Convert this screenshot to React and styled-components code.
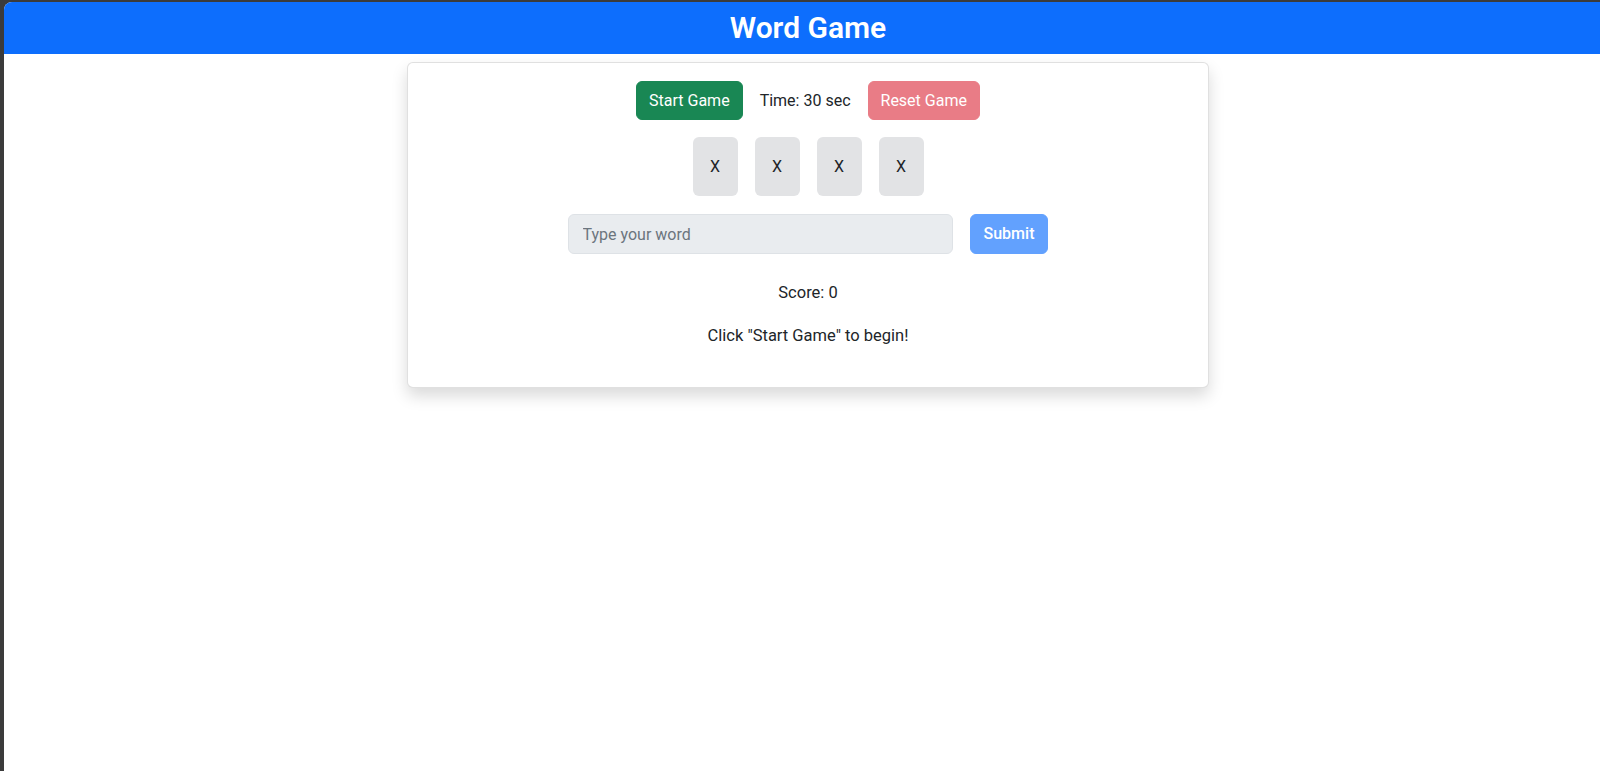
import React, { Component } from 'react';
import styled, { createGlobalStyle } from 'styled-components';

const GlobalStyle = createGlobalStyle`
  html, body {
    margin: 0;
    padding: 0;
    height: 100%;
    overflow: hidden;
    background: #3b3b3b;
  }
  body {
    font-family: "Segoe UI", Roboto, "Noto Sans", sans-serif;
    color: #212529;
  }
`;

const AppWindow = styled.div`
  margin: 2px 0 0 4px;
  width: 1608px;
  height: calc(100vh - 2px);
  background-color: #fff;
  border-top-left-radius: 8px;
  overflow: hidden;
`;

const Header = styled.header`
  display: flex;
  align-items: center;
  justify-content: center;
  height: 52px;
  background-color: #0d6efd;
`;

const Title = styled.h1`
  margin: 0;
  color: #fff;
  font-size: 30px;
  font-weight: 600;
  line-height: 1.2;
`;

const GameCard = styled.div`
  box-sizing: border-box;
  width: 802px;
  margin: 8px auto 0;
  padding: 18px 16px 39px;
  border: 1px solid rgba(0, 0, 0, 0.12);
  border-radius: 6px;
  background: #fff;
  box-shadow: 0 8px 16px rgba(0, 0, 0, 0.15);
  display: flex;
  flex-direction: column;
  align-items: center;
`;

const ControlRow = styled.div`
  display: flex;
  align-items: center;
  justify-content: center;
  gap: 17px;
  margin-bottom: 17px;
`;

const Button = styled.button`
  box-sizing: border-box;
  height: ${(p) => p.height || 39}px;
  padding: 0 ${(p) => p.padX || 12}px;
  border: 1px solid ${(p) => p.color};
  border-radius: 6px;
  background-color: ${(p) => p.color};
  color: #fff;
  font-family: inherit;
  font-size: 16px;
  font-weight: ${(p) => p.weight || 400};
  line-height: 24px;
  cursor: pointer;
`;

const TimeLabel = styled.span`
  font-size: 16px;
  line-height: 24px;
`;

const TileRow = styled.div`
  display: flex;
  gap: 17px;
  margin-bottom: 18px;
`;

const Tile = styled.div`
  display: flex;
  align-items: center;
  justify-content: center;
  width: 45px;
  height: 59px;
  border-radius: 6px;
  background-color: #e2e3e5;
  font-size: 16px;
`;

const InputRow = styled.div`
  display: flex;
  align-items: center;
  gap: 17px;
  margin-bottom: 27px;
`;

const WordInput = styled.input`
  box-sizing: border-box;
  width: 385px;
  height: 40px;
  padding: 0 14px;
  border: 1px solid #dee2e6;
  border-radius: 6px;
  background-color: #e9ecef;
  font-family: inherit;
  font-size: 16px;
  color: #212529;

  &::placeholder {
    color: #6c757d;
  }
`;

const Message = styled.p`
  margin: 0 0 ${(p) => p.gap || 0}px;
  font-size: 16.5px;
  line-height: 24px;
  text-align: center;
`;

export default class App extends Component {
  constructor() {
    super();
    this.state = { letters: ['X', 'X', 'X', 'X'], time: 30, score: 0 };
  }

  render() {
    const { letters, time, score } = this.state;
    return (
      <AppWindow>
        <GlobalStyle />
        <Header>
          <Title>{'Word Game'}</Title>
        </Header>
        <GameCard>
          <ControlRow>
            <Button color="#198754">{'Start Game'}</Button>
            <TimeLabel>{`Time: ${time} sec`}</TimeLabel>
            <Button color="#e97c86">{'Reset Game'}</Button>
          </ControlRow>
          <TileRow>
            {letters.map((l, i) => (
              <Tile key={i}>{l}</Tile>
            ))}
          </TileRow>
          <InputRow>
            <WordInput placeholder="Type your word" disabled />
            <Button color="#62a1fe" height={40} weight={500} padX={13}>
              {'Submit'}
            </Button>
          </InputRow>
          <Message gap={19}>{`Score: ${score}`}</Message>
          <Message>{'Click "Start Game" to begin!'}</Message>
        </GameCard>
      </AppWindow>
    );
  }
}
